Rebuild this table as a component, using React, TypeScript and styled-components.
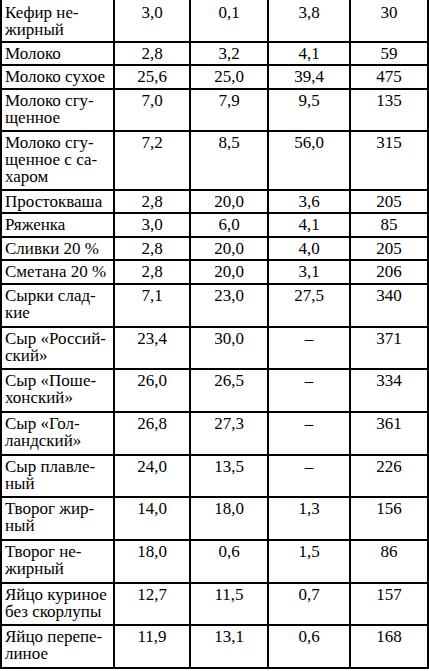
import React from 'react';
import styled, { createGlobalStyle } from 'styled-components';

const GlobalStyle = createGlobalStyle`
  html, body {
    margin: 0;
    padding: 0;
    background: #ffffff;
  }
`;

const Grid = styled.div`
  width: 429px;
  box-sizing: border-box;
  border-left: 2px solid #000000;
  display: flex;
  flex-direction: column;
`;

const Row = styled.div<{ $lines: number }>`
  display: grid;
  grid-template-columns: 113px 76px 78px 82px 78px;
  height: ${p => (p.$lines === 1 ? 23.5 : p.$lines === 2 ? 42.7 : 58.5)}px;
  box-sizing: border-box;
  border-bottom: 2px solid #000000;
`;

const Cell = styled.div<{ $name?: boolean; $first?: boolean; $font: string }>`
  box-sizing: border-box;
  border-right: 2px solid #000000;
  padding: ${p => (p.$first ? '4px' : '2px')} ${p => (p.$name ? '3px' : '2px')} 0;
  text-align: ${p => (p.$name ? 'left' : 'center')};
  font-family: ${p => p.$font};
  font-size: 17px;
  line-height: 17px;
  color: #000000;
  white-space: nowrap;
  overflow: hidden;
`;

const FONT = 'Liberation Serif';

const rows: string[][] = [
  ['Кефир не-\nжирный', '3,0', '0,1', '3,8', '30'],
  ['Молоко', '2,8', '3,2', '4,1', '59'],
  ['Молоко сухое', '25,6', '25,0', '39,4', '475'],
  ['Молоко сгу-\nщенное', '7,0', '7,9', '9,5', '135'],
  ['Молоко сгу-\nщенное с са-\nхаром', '7,2', '8,5', '56,0', '315'],
  ['Простокваша', '2,8', '20,0', '3,6', '205'],
  ['Ряженка', '3,0', '6,0', '4,1', '85'],
  ['Сливки 20 %', '2,8', '20,0', '4,0', '205'],
  ['Сметана 20 %', '2,8', '20,0', '3,1', '206'],
  ['Сырки слад-\nкие', '7,1', '23,0', '27,5', '340'],
  ['Сыр «Россий-\nский»', '23,4', '30,0', '–', '371'],
  ['Сыр «Поше-\nхонский»', '26,0', '26,5', '–', '334'],
  ['Сыр «Гол-\nландский»', '26,8', '27,3', '–', '361'],
  ['Сыр плавле-\nный', '24,0', '13,5', '–', '226'],
  ['Творог жир-\nный', '14,0', '18,0', '1,3', '156'],
  ['Творог не-\nжирный', '18,0', '0,6', '1,5', '86'],
  ['Яйцо куриное\nбез скорлупы', '12,7', '11,5', '0,7', '157'],
  ['Яйцо перепе-\nлиное', '11,9', '13,1', '0,6', '168'],
];

const App: React.FC = () => {
  return (
    <Grid>
      <GlobalStyle />
      {rows.map((r, i) => {
        const parts = r[0].split('\n');
        return (
          <Row key={i} $lines={parts.length}>
            <Cell $name $first={i === 0} $font={FONT}>
              {parts.map((t, j) => (
                <div key={j}>{t}</div>
              ))}
            </Cell>
            {r.slice(1).map((v, j) => (
              <Cell key={j} $first={i === 0} $font={FONT}>
                {v}
              </Cell>
            ))}
          </Row>
        );
      })}
    </Grid>
  );
};

export default App;
